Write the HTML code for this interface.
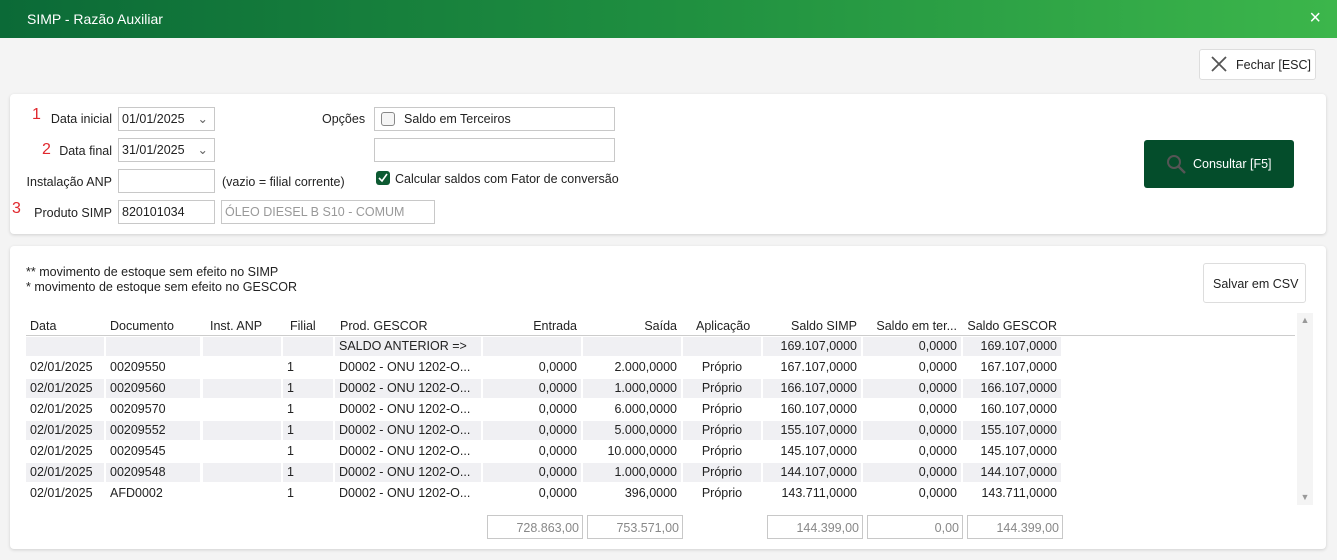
<!DOCTYPE html>
<html><head><meta charset="utf-8"><style>
*{box-sizing:border-box;margin:0;padding:0}
body{width:1337px;height:560px;background:#f4f4f4;font-family:"Liberation Sans",sans-serif;font-size:12.5px;color:#222;position:relative;overflow:hidden}
.a{position:absolute}
.title{left:0;top:0;width:1337px;height:38px;background:linear-gradient(90deg,#0b6a37,#1f8f40 50%,#3cb64b);color:#fff;font-size:14px;padding:11px 0 0 27px}
.panel{background:#fff;border-radius:4px;box-shadow:0 1px 3px rgba(0,0,0,.15)}
.inp{border:1px solid #c8c8c8;background:#fff;height:24px;padding:4px 3px;white-space:nowrap}
.lbl{text-align:right}
.red{color:#e0282e;font-size:16px}
.row{left:26px;width:1036px;height:21px}
.c{position:absolute;top:0;height:19px;line-height:19px;padding:0 4px;white-space:nowrap;overflow:hidden}
.g .c{background:#f0f0f3}
.r{text-align:right}
.tot{border:1px solid #c8c8c8;height:24px;color:#888;text-align:right;padding:5px 3px;background:#fff}
</style></head><body>
<div class="a title">SIMP - Razão Auxiliar</div>
<div class="a" style="right:16px;top:8px;color:#fff;font-size:20px;line-height:20px">×</div>
<div class="a" style="left:1199px;top:49px;width:117px;height:31px;background:#fff;border:1px solid #ddd;border-radius:3px;padding:8px 0 0 36px">Fechar [ESC]</div>
<svg class="a" style="left:1210px;top:55px" width="18" height="18"><path d="M2 2L16 16M16 2L2 16" stroke="#555" stroke-width="1.8"/></svg>

<div class="a panel" style="left:10px;top:94px;width:1316px;height:140px"></div>
<div class="a red" style="left:32px;top:106px">1</div>
<div class="a lbl" style="left:40px;top:112px;width:72px">Data inicial</div>
<div class="a inp" style="left:118px;top:107px;width:97px">01/01/2025 <span style="position:absolute;right:6px;top:3px;color:#666">⌄</span></div>
<div class="a red" style="left:42px;top:141px">2</div>
<div class="a lbl" style="left:50px;top:144px;width:62px">Data final</div>
<div class="a inp" style="left:118px;top:138px;width:97px">31/01/2025 <span style="position:absolute;right:6px;top:3px;color:#666">⌄</span></div>
<div class="a lbl" style="left:14px;top:175px;width:98px">Instalação ANP</div>
<div class="a inp" style="left:118px;top:169px;width:97px"></div>
<div class="a" style="left:222px;top:175px">(vazio = filial corrente)</div>
<div class="a red" style="left:12px;top:200px">3</div>
<div class="a lbl" style="left:20px;top:206px;width:92px">Produto SIMP</div>
<div class="a inp" style="left:118px;top:200px;width:97px">820101034</div>
<div class="a inp" style="left:221px;top:200px;width:214px;color:#999">ÓLEO DIESEL B S10 - COMUM</div>
<div class="a" style="left:322px;top:112px">Opções</div>
<div class="a inp" style="left:374px;top:107px;width:241px;padding-left:29px">Saldo em Terceiros</div>
<div class="a" style="left:381px;top:112px;width:14px;height:14px;border:1px solid #888;border-radius:3px;background:#f5f5f5"></div>
<div class="a inp" style="left:374px;top:138px;width:241px"></div>
<div class="a" style="left:376px;top:171px;width:14px;height:14px;border-radius:3px;background:#0d5a32"></div>
<svg class="a" style="left:376px;top:171px" width="14" height="14"><path d="M3 7L6 10L11 3" stroke="#fff" stroke-width="1.6" fill="none"/></svg>
<div class="a" style="left:395px;top:172px">Calcular saldos com Fator de conversão</div>
<div class="a" style="left:1144px;top:140px;width:150px;height:48px;background:#044d2b;border-radius:3px;color:#fff;padding:17px 0 0 49px">Consultar [F5]</div>
<svg class="a" style="left:1165px;top:153px" width="24" height="24"><circle cx="9" cy="9" r="6" stroke="#555" stroke-width="2" fill="none"/><path d="M13.5 13.5L20 20" stroke="#555" stroke-width="2.4"/></svg>

<div class="a panel" style="left:10px;top:246px;width:1316px;height:303px"></div>
<div class="a" style="left:26px;top:265px;line-height:15px">** movimento de estoque sem efeito no SIMP<br>* movimento de estoque sem efeito no GESCOR</div>
<div class="a" style="left:1203px;top:263px;width:103px;height:40px;border:1px solid #ddd;border-radius:3px;background:#fff;padding:13px 0 0 9px">Salvar em CSV</div>
<div class="a" style="left:1297px;top:313px;width:16px;height:192px;background:#f4f4f4;color:#999;font-size:9px;text-align:center;padding-top:2px">▲<div style="position:absolute;bottom:3px;width:16px">▼</div></div>
<div class="a" style="left:26px;top:335px;width:1269px;height:1px;background:#ccc"></div>
<div class="a row" style="top:317px">
<div class="c" style="left:0">Data</div><div class="c" style="left:80px">Documento</div><div class="c" style="left:180px">Inst. ANP</div><div class="c" style="left:260px">Filial</div><div class="c" style="left:310px">Prod. GESCOR</div><div class="c r" style="left:457px;width:98px">Entrada</div><div class="c r" style="left:557px;width:98px">Saída</div><div class="c" style="left:666px">Aplicação</div><div class="c r" style="left:737px;width:98px">Saldo SIMP</div><div class="c r" style="left:837px;width:98px">Saldo em ter...</div><div class="c r" style="left:937px;width:98px">Saldo GESCOR</div></div>
<div id="rows"></div>
<script>
var d=[["","","","","SALDO ANTERIOR =>","","","","169.107,0000","0,0000","169.107,0000"],
["02/01/2025","00209550","","1","D0002 - ONU 1202-O...","0,0000","2.000,0000","Próprio","167.107,0000","0,0000","167.107,0000"],
["02/01/2025","00209560","","1","D0002 - ONU 1202-O...","0,0000","1.000,0000","Próprio","166.107,0000","0,0000","166.107,0000"],
["02/01/2025","00209570","","1","D0002 - ONU 1202-O...","0,0000","6.000,0000","Próprio","160.107,0000","0,0000","160.107,0000"],
["02/01/2025","00209552","","1","D0002 - ONU 1202-O...","0,0000","5.000,0000","Próprio","155.107,0000","0,0000","155.107,0000"],
["02/01/2025","00209545","","1","D0002 - ONU 1202-O...","0,0000","10.000,0000","Próprio","145.107,0000","0,0000","145.107,0000"],
["02/01/2025","00209548","","1","D0002 - ONU 1202-O...","0,0000","1.000,0000","Próprio","144.107,0000","0,0000","144.107,0000"],
["02/01/2025","AFD0002","","1","D0002 - ONU 1202-O...","0,0000","396,0000","Próprio","143.711,0000","0,0000","143.711,0000"]];
var cols=[[0,78,0],[80,94,0],[177,78,0],[257,50,0],[309,146,0],[457,98,1],[557,98,1],[657,78,2],[737,98,1],[837,98,1],[937,98,1]];
var h="";d.forEach(function(r,i){h+='<div class="a row'+(i%2==0?' g':'')+'" style="top:'+(337+i*21)+'px">';
r.forEach(function(t,j){var c=cols[j];h+='<div class="c" style="left:'+c[0]+'px;width:'+c[1]+'px;text-align:'+(c[2]==1?'right':c[2]==2?'center':'left')+'">'+t+'</div>';});h+='</div>';});
document.getElementById('rows').innerHTML=h;
</script>
<div class="a tot" style="left:487px;top:515px;width:96px">728.863,00</div>
<div class="a tot" style="left:587px;top:515px;width:96px">753.571,00</div>
<div class="a tot" style="left:767px;top:515px;width:96px">144.399,00</div>
<div class="a tot" style="left:867px;top:515px;width:96px">0,00</div>
<div class="a tot" style="left:967px;top:515px;width:96px">144.399,00</div>
</body></html>
